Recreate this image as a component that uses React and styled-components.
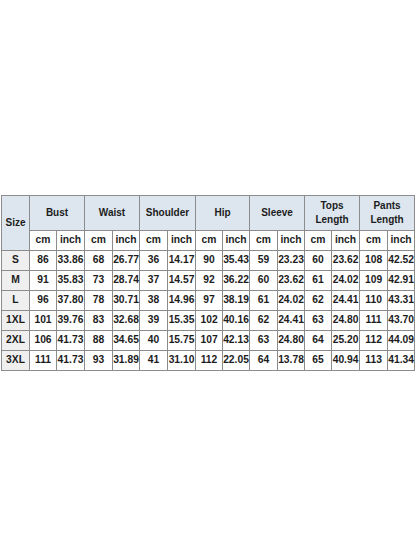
import React from "react";
import styled, { createGlobalStyle } from "styled-components";

const Global = createGlobalStyle`
  html, body { margin: 0; padding: 0; background: #ffffff; }
  body { font-family: "Liberation Sans", Arial, sans-serif; }
`;

const Page = styled.div`
  width: 416px;
  height: 555px;
  padding: 195px 0 0 1px;
  box-sizing: border-box;
  background: #fff;
`;

const Table = styled.table`
  border-collapse: collapse;
  table-layout: fixed;
  width: 414px;
  font-family: "Liberation Sans", Arial, sans-serif;
  font-weight: bold;
  color: #1c1c1c;
`;

const Cell = styled.td`
  border: 1px solid #8c8c8c;
  padding: 0;
  text-align: center;
  vertical-align: middle;
  font-size: ${(p) => (p.$head ? 10 : 10.3)}px;
  line-height: 14.5px;
  height: ${(p) => p.$h || 19}px;
  background: ${(p) => (p.$head ? "#dde6ef" : p.$size ? "#efefef" : "#ffffff")};
  white-space: nowrap;
  overflow: visible;
`;

const widths = [28, 27, 28, 28, 27, 28, 28, 27, 27, 28, 27, 27, 28, 28, 27];

const groups = [
  ["Bust"],
  ["Waist"],
  ["Shoulder"],
  ["Hip"],
  ["Sleeve"],
  ["Tops", "Length"],
  ["Pants", "Length"],
];

const rows = [
  ["S", 86, "33.86", 68, "26.77", 36, "14.17", 90, "35.43", 59, "23.23", 60, "23.62", 108, "42.52"],
  ["M", 91, "35.83", 73, "28.74", 37, "14.57", 92, "36.22", 60, "23.62", 61, "24.02", 109, "42.91"],
  ["L", 96, "37.80", 78, "30.71", 38, "14.96", 97, "38.19", 61, "24.02", 62, "24.41", 110, "43.31"],
  ["1XL", 101, "39.76", 83, "32.68", 39, "15.35", 102, "40.16", 62, "24.41", 63, "24.80", 111, "43.70"],
  ["2XL", 106, "41.73", 88, "34.65", 40, "15.75", 107, "42.13", 63, "24.80", 64, "25.20", 112, "44.09"],
  ["3XL", 111, "41.73", 93, "31.89", 41, "31.10", 112, "22.05", 64, "13.78", 65, "40.94", 113, "41.34"],
];

export default function App() {
  return (
    <Page>
      <Global />
      <Table>
        <colgroup>
          {widths.map((w, i) => (
            <col key={i} style={{ width: w }} />
          ))}
        </colgroup>
        <tbody>
          <tr>
            <Cell as="th" $head $h={34} rowSpan={2}>Size</Cell>
            {groups.map((g, i) => (
              <Cell as="th" key={i} $head $h={34} colSpan={2}>
                {g.map((t, j) => (
                  <React.Fragment key={j}>
                    {j > 0 && <br />}
                    {t}
                  </React.Fragment>
                ))}
              </Cell>
            ))}
          </tr>
          <tr>
            {groups.map((g, i) => (
              <React.Fragment key={i}>
                <Cell as="th" $sub>cm</Cell>
                <Cell as="th" $sub>inch</Cell>
              </React.Fragment>
            ))}
          </tr>
          {rows.map((r, i) => (
            <tr key={i}>
              {r.map((v, j) => (
                <Cell key={j} $size={j === 0}>
                  {v}
                </Cell>
              ))}
            </tr>
          ))}
        </tbody>
      </Table>
    </Page>
  );
}
